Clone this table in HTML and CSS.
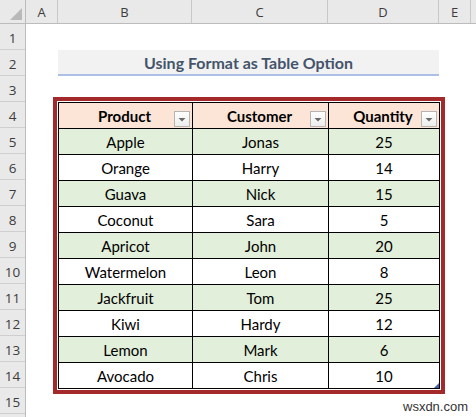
FILE: index.html
```html
<!DOCTYPE html>
<html>
<head>
<meta charset="utf-8">
<link rel="stylesheet" href="styles.css">
</head>
<body>
<div class="sheet">
  <div class="colhead">
    <div class="corner"><svg width="26" height="24" viewBox="0 0 26 24"><polygon points="22,8 22,20 10,20" fill="#b9b9b9"/></svg></div>
    <div class="ch col-a">A</div>
    <div class="ch col-b">B</div>
    <div class="ch col-c">C</div>
    <div class="ch col-d">D</div>
    <div class="ch col-e">E</div>
    <div class="ch col-rest"></div>
  </div>
  <div class="main">
    <div class="rowhead">
      <div class="rh">1</div><div class="rh">2</div><div class="rh">3</div><div class="rh">4</div>
      <div class="rh">5</div><div class="rh">6</div><div class="rh">7</div><div class="rh">8</div>
      <div class="rh">9</div><div class="rh">10</div><div class="rh">11</div><div class="rh">12</div>
      <div class="rh">13</div><div class="rh">14</div><div class="rh">15</div><div class="rh"></div>
    </div>
    <div class="content">
      <div class="title">Using Format as Table Option</div>
      <div class="tbl">
        <div class="c hd">Product<span class="dd"><svg width="14" height="14" viewBox="0 0 14 14"><polygon points="3.5,6 10.5,6 7,9.5" fill="#6a6a6a"/></svg></span></div>
        <div class="c hd">Customer<span class="dd"><svg width="14" height="14" viewBox="0 0 14 14"><polygon points="3.5,6 10.5,6 7,9.5" fill="#6a6a6a"/></svg></span></div>
        <div class="c hd">Quantity<span class="dd"><svg width="14" height="14" viewBox="0 0 14 14"><polygon points="3.5,6 10.5,6 7,9.5" fill="#6a6a6a"/></svg></span></div>

        <div class="c g">Apple</div><div class="c g">Jonas</div><div class="c g">25</div>
        <div class="c">Orange</div><div class="c">Harry</div><div class="c">14</div>
        <div class="c g">Guava</div><div class="c g">Nick</div><div class="c g">15</div>
        <div class="c">Coconut</div><div class="c">Sara</div><div class="c">5</div>
        <div class="c g">Apricot</div><div class="c g">John</div><div class="c g">20</div>
        <div class="c">Watermelon</div><div class="c">Leon</div><div class="c">8</div>
        <div class="c g">Jackfruit</div><div class="c g">Tom</div><div class="c g">25</div>
        <div class="c">Kiwi</div><div class="c">Hardy</div><div class="c">12</div>
        <div class="c g">Lemon</div><div class="c g">Mark</div><div class="c g">6</div>
        <div class="c">Avocado</div><div class="c">Chris</div><div class="c last">10<svg class="handle" width="5" height="5" viewBox="0 0 5 5"><polygon points="5,0 5,5 0,5" fill="#4a5fa8"/></svg></div>
      </div>
    </div>
  </div>
  <div class="watermark">wsxdn.com</div>
</div>
</body>
</html>
```

FILE: styles.css
```css
* { box-sizing: border-box; }
html, body { margin: 0; padding: 0; background: #ffffff; }
body { width: 476px; height: 417px; overflow: hidden; }

.sheet {
  position: relative;
  width: 476px;
  height: 417px;
  overflow: hidden;
  display: flex;
  flex-direction: column;
  font-family: "Lato", "Noto Sans", sans-serif;
}

.colhead {
  display: flex;
  height: 24px;
  flex: none;
  background: #e9e9e9;
  border-bottom: 1px solid #bcbcbc;
}
.corner {
  width: 26px;
  flex: none;
  border-right: 1px solid #bcbcbc;
}
.corner svg { display: block; }
.ch {
  flex: none;
  border-right: 1px solid #c8c8c8;
  display: flex;
  align-items: center;
  justify-content: center;
  font-family: "Open Sans", "Noto Sans", sans-serif;
  font-size: 13px;
  color: #3c3c3c;
  padding-top: 1px;
}
.col-a { width: 32px; }
.col-b { width: 134px; }
.col-c { width: 136px; }
.col-d { width: 111px; }
.col-e { width: 32px; }
.col-rest { flex: 1; border-right: none; }

.main {
  display: flex;
  flex: 1;
  min-height: 0;
  overflow: hidden;
}
.rowhead {
  width: 26px;
  flex: none;
  display: flex;
  flex-direction: column;
  background: #e9e9e9;
  border-right: 1px solid #bcbcbc;
}
.rh {
  height: 26px;
  flex: none;
  border-bottom: 1px solid #cfcfcf;
  display: flex;
  align-items: center;
  justify-content: center;
  font-family: "Open Sans", "Noto Sans", sans-serif;
  font-size: 13.5px;
  color: #3c3c3c;
  padding-top: 3px;
}

.content {
  flex: 1;
  padding-left: 32px;
  padding-top: 26px;
  display: flex;
  flex-direction: column;
  align-items: flex-start;
}
.title {
  width: 381px;
  height: 26px;
  margin-bottom: 26px;
  background: #f2f2f2;
  border-bottom: 2px solid #adbfe2;
  display: flex;
  align-items: center;
  justify-content: center;
  font-weight: 700;
  font-size: 16px;
  color: #44546a;
  padding-top: 1px;
}

.tbl {
  display: grid;
  grid-template-columns: 134px 136px 111px;
  grid-auto-rows: 26px;
  border-right: 1px solid #000;
  border-bottom: 1px solid #000;
  outline: 4px solid #a3292b;
  outline-offset: 1px;
}
.c {
  position: relative;
  border-left: 1px solid #000;
  border-top: 1px solid #000;
  display: flex;
  align-items: center;
  justify-content: center;
  font-size: 15px;
  color: #000;
  background: #ffffff;
  padding-top: 1px;
}
.c.g { background: #e2efda; }
.c.hd {
  background: #fce4d6;
  font-weight: 700;
  padding-right: 2px;
}
.dd {
  position: absolute;
  right: 2px;
  bottom: 1px;
  width: 16px;
  height: 16px;
  border: 1px solid #b5b5b5;
  background: linear-gradient(#ffffff, #ececec);
  display: flex;
  align-items: center;
  justify-content: center;
}
.dd svg { display: block; }
.handle {
  position: absolute;
  right: 0;
  bottom: 0;
}

.watermark {
  position: absolute;
  left: 403px;
  top: 399px;
  font-family: "Liberation Sans", Arial, sans-serif;
  font-size: 13px;
  color: #333333;
}
```
